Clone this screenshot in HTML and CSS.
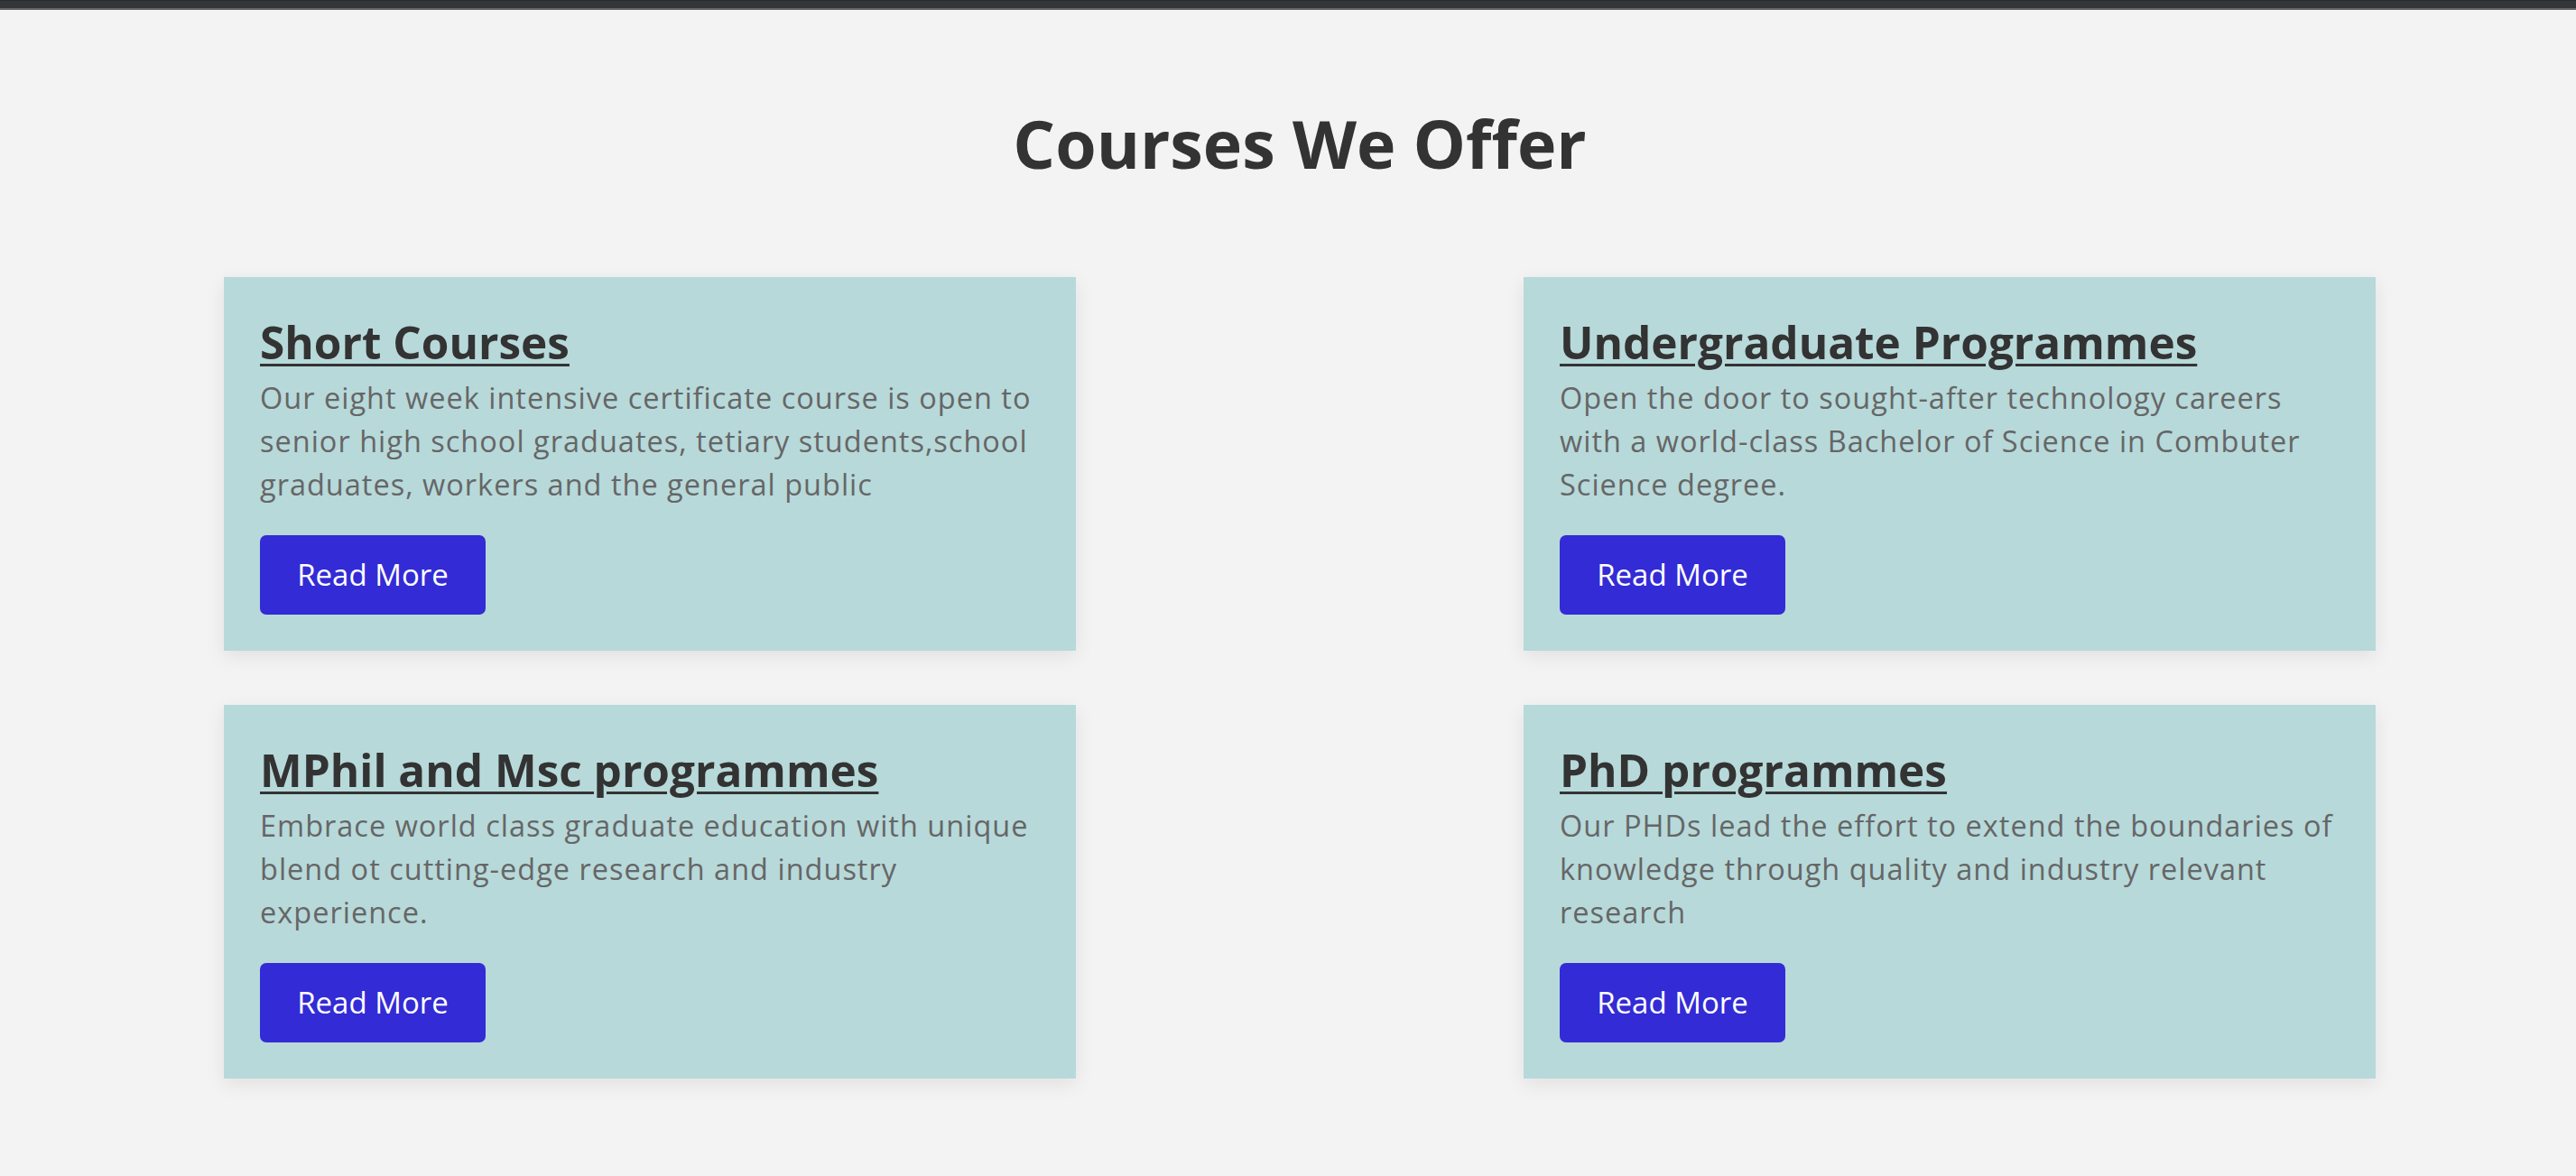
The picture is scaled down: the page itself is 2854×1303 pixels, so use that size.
FILE: index.html
```html
<!DOCTYPE html>
<html lang="en">
<head>
<meta charset="utf-8">
<title>Courses We Offer</title>
<link rel="stylesheet" href="styles.css">
</head>
<body>
<div class="topbar"></div>
<section class="courses">
  <h1 class="courses-title">Courses We Offer</h1>
  <div class="course-grid">
    <div class="course-card">
      <h3 class="course-name"><a href="#">Short Courses</a></h3>
      <p class="course-text">Our eight week intensive certificate course is open to<br>senior high school graduates, tetiary students,school<br>graduates, workers and the general public</p>
      <a class="btn" href="#">Read More</a>
    </div>
    <div class="course-card">
      <h3 class="course-name"><a href="#">Undergraduate Programmes</a></h3>
      <p class="course-text">Open the door to sought-after technology careers<br>with a world-class Bachelor of Science in Combuter<br>Science degree.</p>
      <a class="btn" href="#">Read More</a>
    </div>
    <div class="course-card">
      <h3 class="course-name"><a href="#">MPhil and Msc programmes</a></h3>
      <p class="course-text">Embrace world class graduate education with unique<br>blend ot cutting-edge research and industry<br>experience.</p>
      <a class="btn" href="#">Read More</a>
    </div>
    <div class="course-card">
      <h3 class="course-name"><a href="#">PhD programmes</a></h3>
      <p class="course-text">Our PHDs lead the effort to extend the boundaries of<br>knowledge through quality and industry relevant<br>research</p>
      <a class="btn" href="#">Read More</a>
    </div>
  </div>
</section>
</body>
</html>
```
FILE: styles.css
```css
* { box-sizing: border-box; }

html, body {
  margin: 0;
  padding: 0;
  background: #f3f3f3;
  font-family: "Open Sans", "Noto Sans", sans-serif;
}

.topbar {
  height: 11px;
  background: #35363a;
  border-top: 1px solid #2a2b2e;
  border-bottom: 2px solid #666666;
}

.courses {
  margin-left: 248px;
  width: 2384px;
  padding-top: 103px;
  padding-bottom: 100px;
}

.courses-title {
  margin: 0 0 103px;
  text-align: center;
  font-size: 73.5px;
  line-height: 90px;
  font-weight: 700;
  color: #333333;
}

.course-grid {
  display: grid;
  grid-template-columns: 944px 944px;
  justify-content: space-between;
  row-gap: 60px;
}

.course-card {
  background: #b7d9da;
  padding: 42px 40px 40px;
  box-shadow: 0 6px 20px rgba(0, 0, 0, 0.08);
}

.course-name {
  margin: 0 0 8px;
  font-size: 49.5px;
  line-height: 60px;
  font-weight: 700;
}

.course-name a {
  color: #333333;
  text-decoration: underline;
  text-decoration-thickness: 3px;
  text-underline-offset: 5px;
}

.course-text {
  margin: 0 0 32px;
  font-size: 32.5px;
  line-height: 48px;
  letter-spacing: 1px;
  color: #666666;
  white-space: nowrap;
}

.btn {
  display: inline-block;
  width: 250px;
  padding: 24px 0;
  text-align: center;
  font-size: 33px;
  line-height: 40px;
  color: #ffffff;
  background: #332bd5;
  border-radius: 7px;
  text-decoration: none;
}
```
